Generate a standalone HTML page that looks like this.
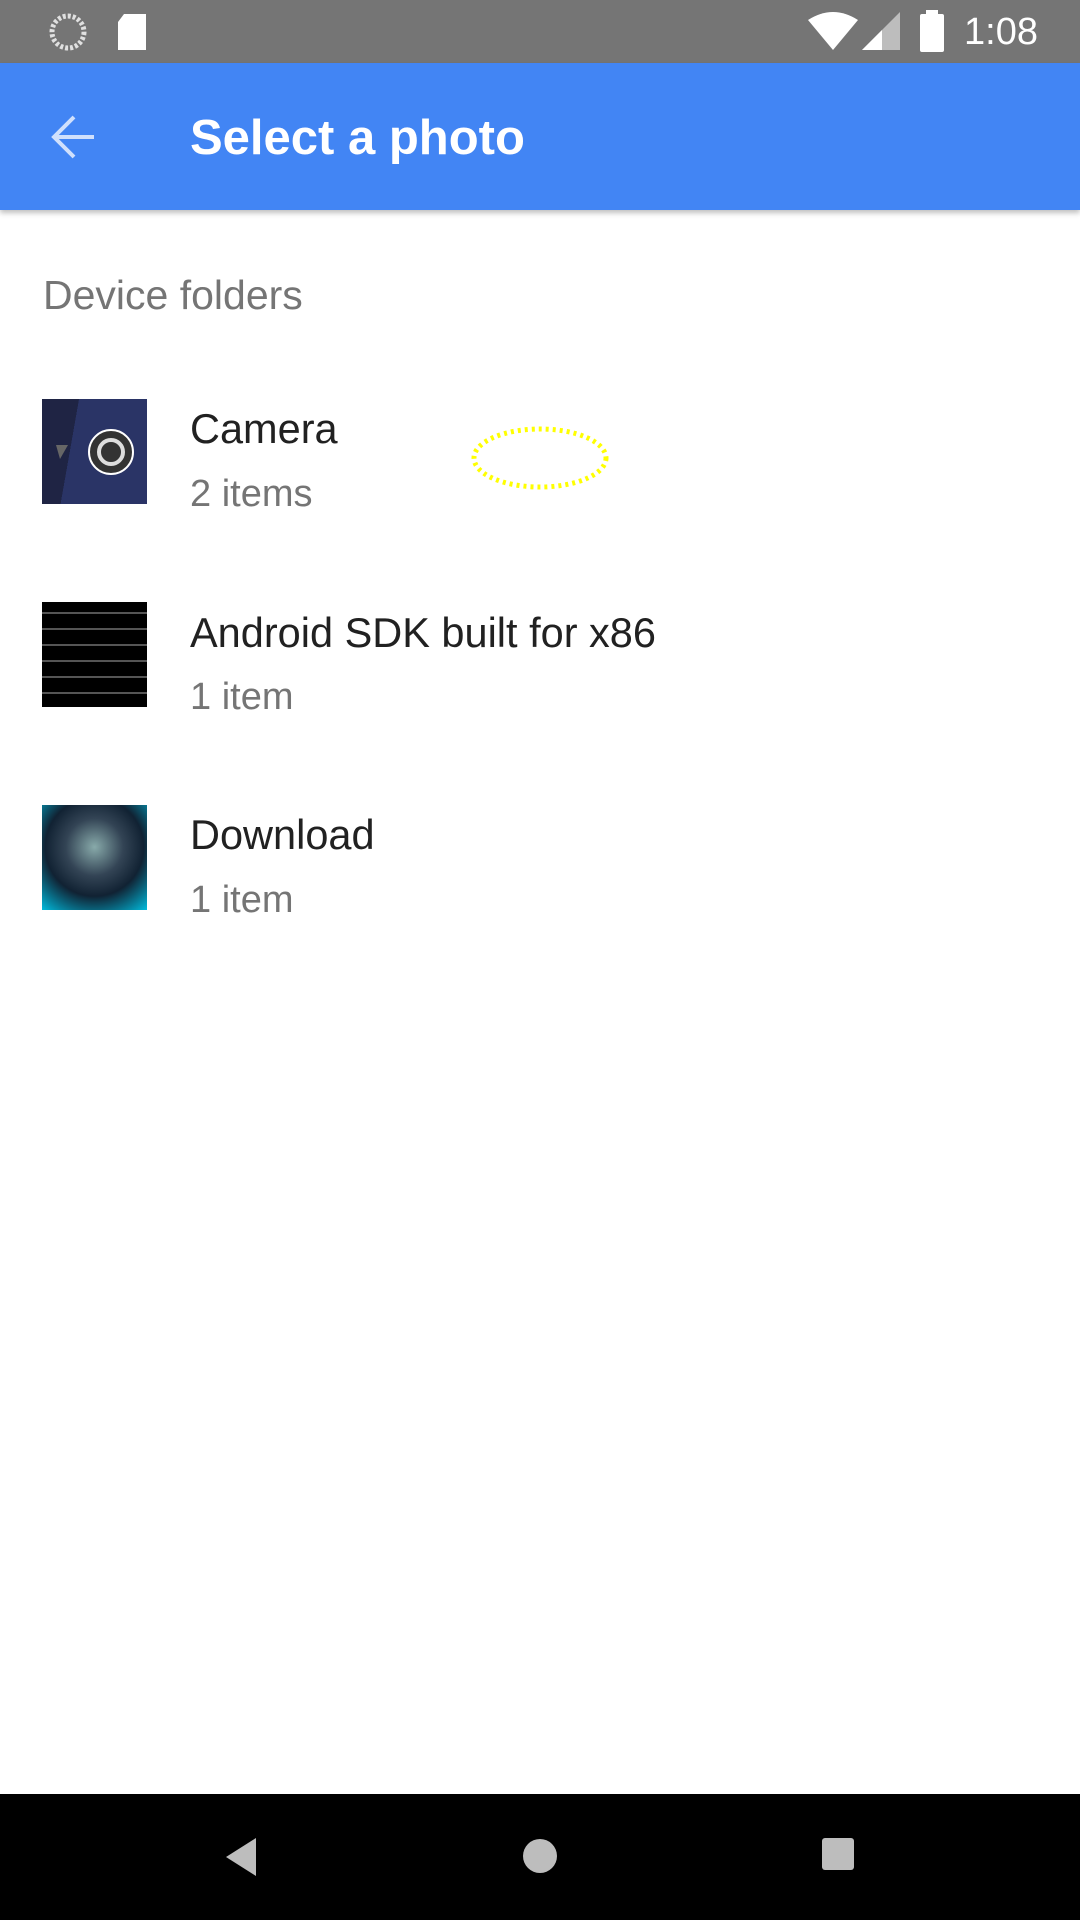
<!DOCTYPE html>
<html><head><meta charset="utf-8"><style>
*{margin:0;padding:0;box-sizing:border-box}
body{width:1080px;height:1920px;background:#fff;font-family:"Liberation Sans",Roboto,sans-serif;position:relative;overflow:hidden}
.abs{position:absolute}
.status{left:0;top:0;width:1080px;height:63px;background:#757575}
.bar{left:0;top:63px;width:1080px;height:147px;background:#4285f4;box-shadow:0 3px 5px rgba(0,0,0,.25)}
.title{left:190px;top:108px;color:#fff;font-size:49px;line-height:60px;font-weight:bold}
.hdr{left:43px;top:270px;color:#757575;font-size:41px;line-height:50px}
.t{left:190px;color:#212121;font-size:41.5px;line-height:50px}
.s{left:190px;color:#757575;font-size:38px;line-height:50px}
.th{left:42px;width:105px;height:105px}
.nav{left:0;top:1794px;width:1080px;height:126px;background:#000}
</style></head><body>
<div class="abs status">
 <svg class="abs" style="left:48px;top:12px" width="40" height="40"><circle cx="20" cy="20" r="16" fill="none" stroke="#e0e0e0" stroke-width="5" stroke-dasharray="3 2"/></svg>
 <svg class="abs" style="left:116px;top:12px" width="32" height="40"><path d="M8 2h22v36H2V10z" fill="#fff"/></svg>
 <svg class="abs" style="left:808px;top:12px" width="50" height="40"><path d="M0 8Q25-8 50 8L25 38z" fill="#fff"/></svg>
 <svg class="abs" style="left:862px;top:12px" width="40" height="40"><path d="M38 0V38H0z" fill="#bdbdbd"/><path d="M20 18V38H0z" fill="#fff"/></svg>
 <svg class="abs" style="left:920px;top:10px" width="26" height="42"><rect x="6" y="0" width="12" height="5" fill="#fff"/><rect x="0" y="4" width="24" height="38" rx="2" fill="#fff"/></svg>
 <div class="abs" style="left:964px;top:8px;color:#fff;font-size:38px;line-height:48px">1:08</div>
</div>
<div class="abs bar">
 <svg class="abs" style="left:48px;top:48px" width="52" height="52"><path d="M46 26H6M26 6L6 26l20 20" stroke="#d0e0fc" stroke-width="4" fill="none"/></svg>
</div>
<div class="abs title">Select a photo</div>
<div class="abs hdr">Device folders</div>

<div class="abs th" style="top:399px;background:linear-gradient(100deg,#1f2444 0 30%,#2a3466 30% 100%)">
 <svg class="abs" style="left:0;top:0" width="105" height="105"><circle cx="69" cy="53" r="22" fill="#333" stroke="#fff" stroke-width="2"/><circle cx="69" cy="53" r="12" fill="none" stroke="#ddd" stroke-width="4"/><path d="M14 46l12 0-8 14z" fill="#666"/></svg>
</div>
<div class="abs t" style="top:404px">Camera</div>
<div class="abs s" style="top:469px">2 items</div>

<div class="abs th" style="top:602px;background:repeating-linear-gradient(#000 0 10px,#555 10px 12px,#000 12px 16px)"></div>
<div class="abs t" style="top:608px">Android SDK built for x86</div>
<div class="abs s" style="top:672px">1 item</div>

<div class="abs th" style="top:805px;background:radial-gradient(circle at 50% 40%,#8aa 0,#345 35%,#123 60%,#0bd 100%)"></div>
<div class="abs t" style="top:810px">Download</div>
<div class="abs s" style="top:875px">1 item</div>

<svg class="abs" style="left:470px;top:424px" width="140" height="68"><ellipse cx="70" cy="34" rx="66" ry="29" fill="none" stroke="#ffff00" stroke-width="5" stroke-dasharray="3 4"/></svg>

<div class="abs nav">
 <svg class="abs" style="left:222px;top:40px" width="40" height="46"><path d="M34 4V42L4 23z" fill="#bdbdbd"/></svg>
 <svg class="abs" style="left:520px;top:42px" width="40" height="40"><circle cx="20" cy="20" r="17" fill="#bdbdbd"/></svg>
 <svg class="abs" style="left:821px;top:43px" width="34" height="34"><rect x="1" y="1" width="32" height="32" rx="3" fill="#bdbdbd"/></svg>
</div>
</body></html>
